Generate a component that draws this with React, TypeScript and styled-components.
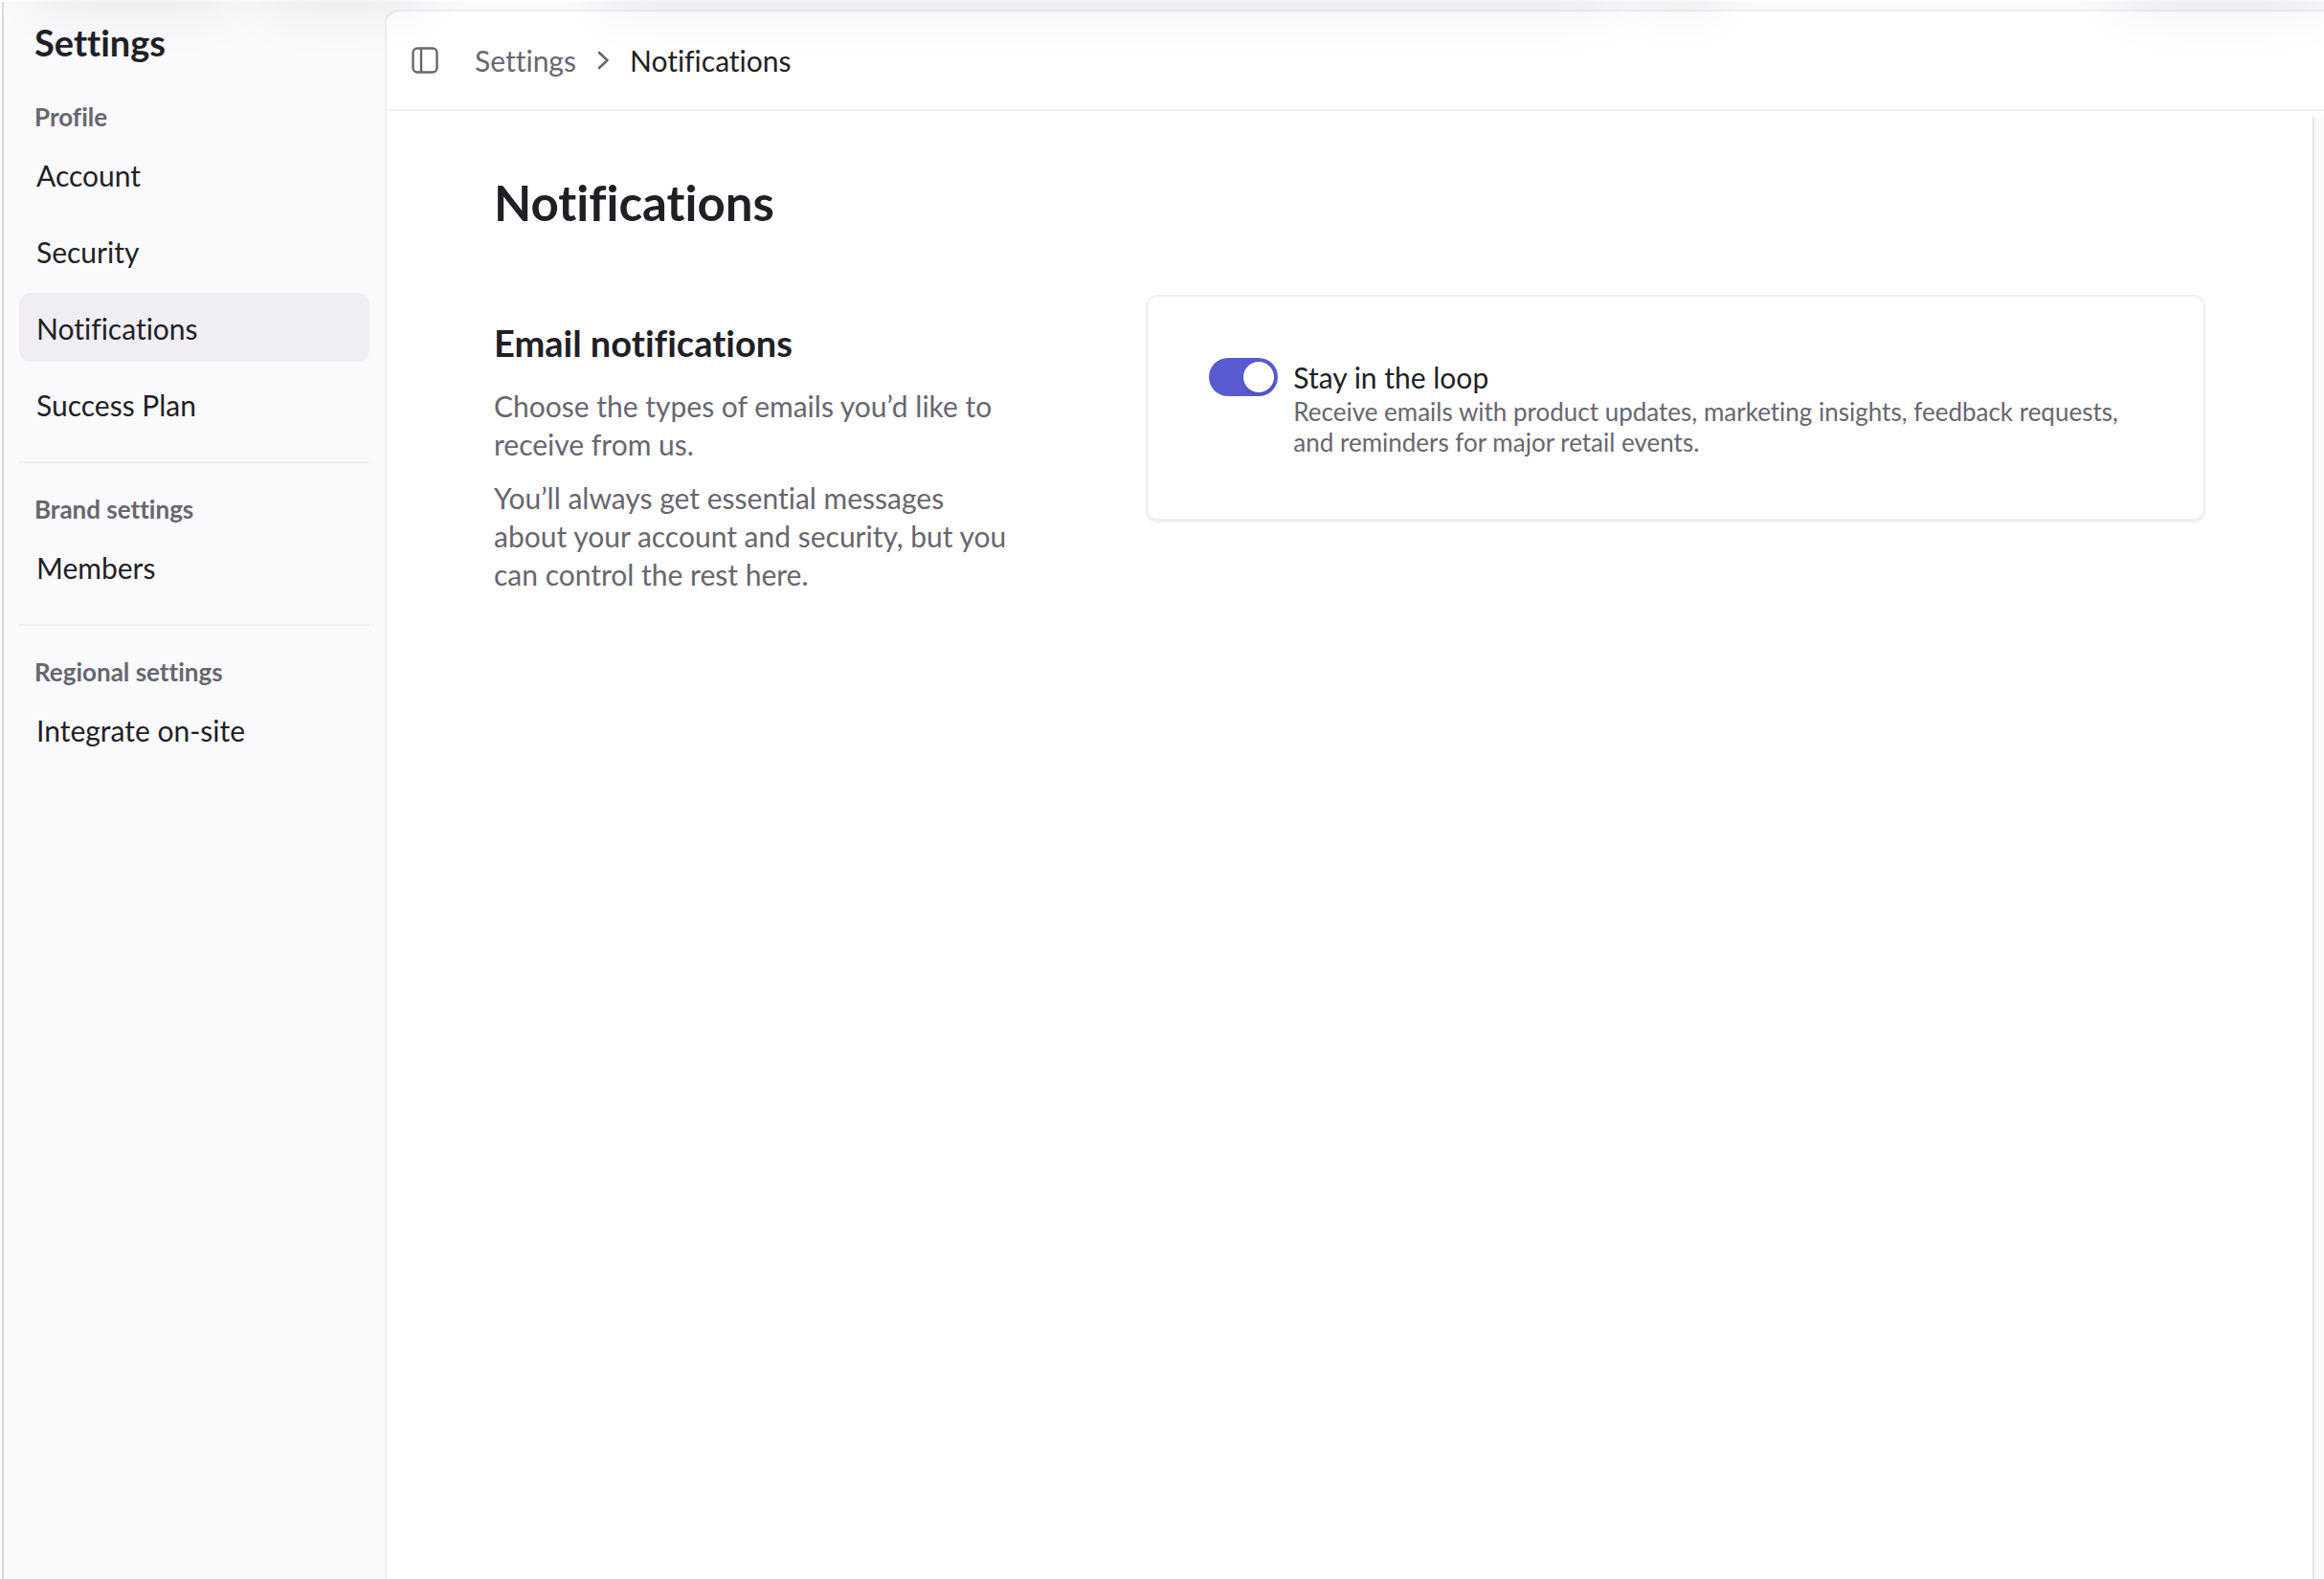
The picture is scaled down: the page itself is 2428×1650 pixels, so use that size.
import React, { useId, useState } from 'react';
import styled, { createGlobalStyle } from 'styled-components';

const color = {
  ink: '#211f26',
  muted: '#68666f',
  line: '#efeef3',
  edge: '#dad9e1',
  canvas: '#fafafc',
  selected: '#f0eef3',
  accent: '#5b5bd0',
};

const GlobalStyle = createGlobalStyle`
  *, *::before, *::after { box-sizing: border-box; }
  body {
    margin: 0;
    background: #fff;
    color: ${color.ink};
    font-family: Lato, "Liberation Sans", sans-serif;
    font-size: 30px;
    font-variant-ligatures: none;
  }
  h1, h2, p, ul, ol { margin: 0; padding: 0; }
  ul, ol { list-style: none; }
`;

const Shell = styled.div`
  position: relative;
  display: flex;
  min-height: 100vh;
  overflow: hidden;
  padding: 2px 0 0 2px;
`;

const Frame = styled.div`
  flex: 1;
  display: flex;
  min-width: 0;
  background: ${color.canvas};
  border-left: 2px solid ${color.edge};
`;

const Sidebar = styled.nav`
  flex: 0 0 398px;
  padding: 0 16px;
`;

const SidebarTitle = styled.p`
  padding: 20px 16px 8px;
  font-size: 38px;
  line-height: 44px;
  font-weight: 700;
`;

const Group = styled.section`
  & + & {
    margin-top: 24px;
    border-top: 2px solid ${color.line};
  }
`;

const GroupLabel = styled.h2`
  padding: 32px 16px 8px;
  font-size: 26px;
  line-height: 32px;
  font-weight: 700;
  color: ${color.muted};
`;

const NavList = styled.ul`
  display: flex;
  flex-direction: column;
  gap: 8px;
`;

const NavLink = styled.a<{ $active?: boolean }>`
  display: block;
  padding: 17px 18px 15px;
  border-radius: 12px;
  line-height: 40px;
  color: inherit;
  text-decoration: none;
  background: ${(p) => (p.$active ? color.selected : 'transparent')};
`;

const Panel = styled.div`
  flex: 1;
  min-width: 0;
  display: flex;
  flex-direction: column;
  margin-top: 8px;
  background: #fff;
  border: solid ${color.line};
  border-width: 2px 0 0 2px;
  border-top-left-radius: 14px;
`;

const Header = styled.header`
  display: flex;
  align-items: center;
  gap: 38px;
  height: 104px;
  padding: 0 26px;
  border-bottom: 2px solid ${color.line};
`;

const IconButton = styled.button`
  display: flex;
  padding: 0;
  border: 0;
  background: none;
  color: ${color.muted};
  cursor: pointer;
`;

const Crumbs = styled.ol`
  display: flex;
  align-items: center;
  gap: 13px;
  line-height: 40px;
  color: ${color.muted};

  li { display: flex; align-items: center; gap: 13px; }
  a { color: inherit; text-decoration: none; }
  [aria-current] { color: ${color.ink}; }
`;

const Body = styled.div`
  flex: 1;
  display: flex;
`;

const Content = styled.main`
  flex: 1;
  min-width: 0;
  padding: 66px 112px;
`;

const ScrollTrack = styled.div`
  flex: 0 0 12px;
  margin-top: 6px;
  background: #fafafa;
  border-left: 2px solid #e7e7e7;
`;

const PageTitle = styled.h1`
  margin-bottom: 66px;
  font-size: 51px;
  line-height: 60px;
  font-weight: 700;
`;

const Split = styled.div`
  display: grid;
  grid-template-columns: minmax(0, 1fr) minmax(0, 2fr);
  gap: 128px;
  align-items: start;
`;

const Intro = styled.div`
  display: flex;
  flex-direction: column;
  gap: 16px;
  padding-top: 28px;
`;

const IntroTitle = styled.h2`
  margin-bottom: 8px;
  font-size: 38px;
  line-height: 44px;
  font-weight: 700;
`;

const IntroText = styled.p`
  line-height: 40px;
  color: ${color.muted};
`;

const Card = styled.div`
  display: flex;
  gap: 16px;
  padding: 64px;
  border: 2px solid ${color.line};
  border-bottom-width: 4px;
  border-radius: 12px;
`;

const Switch = styled.input`
  appearance: none;
  flex: none;
  display: flex;
  width: 72px;
  height: 40px;
  margin: 0;
  padding: 4px;
  border-radius: 20px;
  background: #b9b8c2;
  cursor: pointer;

  &::before {
    content: '';
    width: 32px;
    height: 32px;
    border-radius: 50%;
    background: #fff;
    box-shadow: 0 2px 4px rgba(33, 31, 38, 0.2);
  }
  &:checked { justify-content: flex-end; background: ${color.accent}; }
`;

const OptionLabel = styled.label`
  display: block;
  line-height: 40px;
`;

const OptionHint = styled.p`
  font-size: 26px;
  line-height: 32px;
  color: ${color.muted};
`;

/* Soft shade cast over the top edge by the floating bar above the page. */
const TopShade = styled.div`
  position: absolute;
  inset: 0 0 auto;
  display: grid;
  grid-template-columns: 40fr 200fr 35fr 165fr 190fr 1060fr 30fr 70fr 425fr 213fr;
  pointer-events: none;
`;

const Shade = styled.div<{ $column: number }>`
  grid-row: 1;
  grid-column: ${(p) => p.$column};
  height: 80px;
  margin-top: -80px;
  box-shadow: 0 10px 56px rgba(0, 0, 0, 0.07);
`;

const groups = [
  { label: 'Profile', items: ['Account', 'Security', 'Notifications', 'Success Plan'] },
  { label: 'Brand settings', items: ['Members'] },
  { label: 'Regional settings', items: ['Integrate on-site'] },
];

const PanelIcon = () => (
  <svg width="28" height="28" viewBox="0 0 28 28" fill="none" stroke="currentColor" strokeWidth="2.4" aria-hidden="true">
    <rect x="1.5" y="1.5" width="25" height="25" rx="4.5" />
    <path d="M10 1.5v25" />
  </svg>
);

const Chevron = () => (
  <svg width="30" height="30" viewBox="0 0 30 30" fill="none" stroke="currentColor" strokeWidth="2.6" strokeLinecap="round" strokeLinejoin="round" aria-hidden="true">
    <path d="M11 7l8.5 8-8.5 8" />
  </svg>
);

export default function App() {
  const [subscribed, setSubscribed] = useState(true);
  const switchId = useId();

  return (
    <>
      <GlobalStyle />
      <Shell>
        <Frame>
          <Sidebar aria-label="Settings">
            <SidebarTitle>Settings</SidebarTitle>
            {groups.map((group) => (
              <Group key={group.label}>
                <GroupLabel>{group.label}</GroupLabel>
                <NavList>
                  {group.items.map((item) => (
                    <li key={item}>
                      <NavLink href="#" $active={item === 'Notifications'}>
                        {item}
                      </NavLink>
                    </li>
                  ))}
                </NavList>
              </Group>
            ))}
          </Sidebar>

          <Panel>
            <Header>
              <IconButton type="button" aria-label="Toggle sidebar">
                <PanelIcon />
              </IconButton>
              <Crumbs>
                <li>
                  <a href="#">Settings</a>
                  <Chevron />
                </li>
                <li aria-current="page">Notifications</li>
              </Crumbs>
            </Header>

            <Body>
              <Content>
                <PageTitle>Notifications</PageTitle>
                <Split>
                  <Intro>
                    <IntroTitle>Email notifications</IntroTitle>
                    <IntroText>Choose the types of emails you’d like to receive from us.</IntroText>
                    <IntroText>
                      You’ll always get essential messages about your account and security, but you can control the
                      rest here.
                    </IntroText>
                  </Intro>
                  <Card>
                    <Switch
                      id={switchId}
                      type="checkbox"
                      role="switch"
                      checked={subscribed}
                      onChange={(e) => setSubscribed(e.target.checked)}
                    />
                    <div>
                      <OptionLabel htmlFor={switchId}>Stay in the loop</OptionLabel>
                      <OptionHint>
                        Receive emails with product updates, marketing insights, feedback requests, and reminders for
                        major retail events.
                      </OptionHint>
                    </div>
                  </Card>
                </Split>
              </Content>
              <ScrollTrack />
            </Body>
          </Panel>
        </Frame>
        <TopShade>
          {[2, 4, 6, 8, 10].map((column) => (
            <Shade key={column} $column={column} />
          ))}
        </TopShade>
      </Shell>
    </>
  );
}
